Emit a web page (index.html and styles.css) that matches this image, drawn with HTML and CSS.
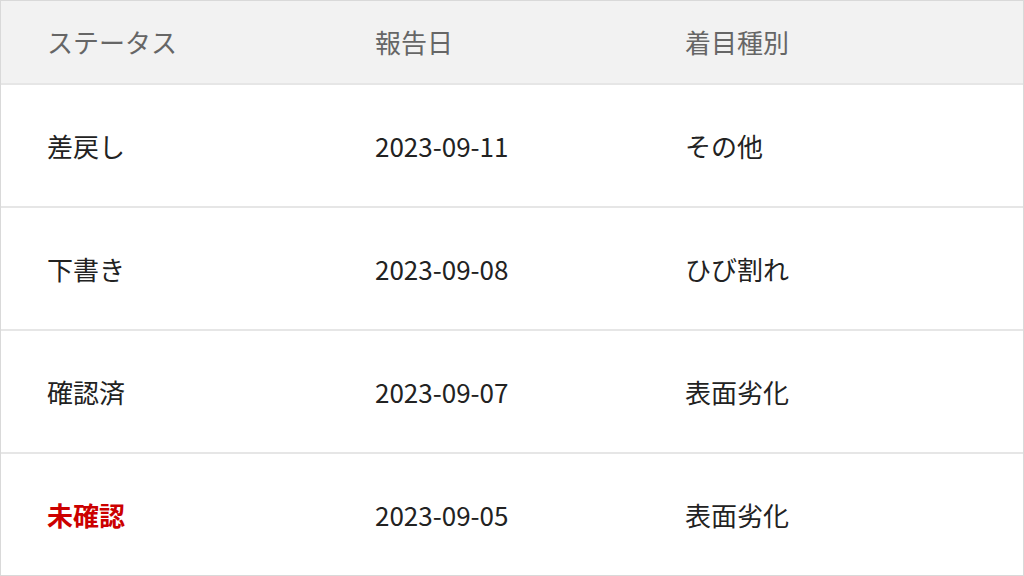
FILE: index.html
```html
<!DOCTYPE html>
<html lang="ja">
<head>
<meta charset="utf-8">
<link rel="stylesheet" href="styles.css">
</head>
<body>
<div class="table">
  <div class="row head">
    <div class="cell">ステータス</div>
    <div class="cell">報告日</div>
    <div class="cell">着目種別</div>
  </div>
  <div class="row">
    <div class="cell">差戻し</div>
    <div class="cell">2023-09-11</div>
    <div class="cell">その他</div>
  </div>
  <div class="row">
    <div class="cell">下書き</div>
    <div class="cell">2023-09-08</div>
    <div class="cell">ひび割れ</div>
  </div>
  <div class="row">
    <div class="cell">確認済</div>
    <div class="cell">2023-09-07</div>
    <div class="cell">表面劣化</div>
  </div>
  <div class="row last">
    <div class="cell alert">未確認</div>
    <div class="cell">2023-09-05</div>
    <div class="cell">表面劣化</div>
  </div>
</div>
</body>
</html>
```
FILE: styles.css
```css
html, body {
  margin: 0;
  padding: 0;
  background: #fff;
}
body {
  font-family: "Noto Sans CJK JP", "Noto Sans", sans-serif;
  font-size: 26px;
  color: #222;
}
.table {
  width: 1024px;
  height: 576px;
  box-sizing: border-box;
  border: 1px solid #d9d9d9;
  display: flex;
  flex-direction: column;
}
.row {
  display: grid;
  grid-template-columns: 328px 310px 1fr;
  height: 123px;
  box-sizing: border-box;
  border-bottom: 2px solid #e6e6e6;
  align-items: center;
}
.row.head {
  height: 84px;
  background: #f2f2f2;
  color: #666;
}
.row.last {
  border-bottom: none;
  flex: 1;
}
.cell {
  padding-left: 46px;
  line-height: 1.3;
}
.alert {
  color: #d0021b;
  color: #cc0000;
  font-weight: 700;
}
```
